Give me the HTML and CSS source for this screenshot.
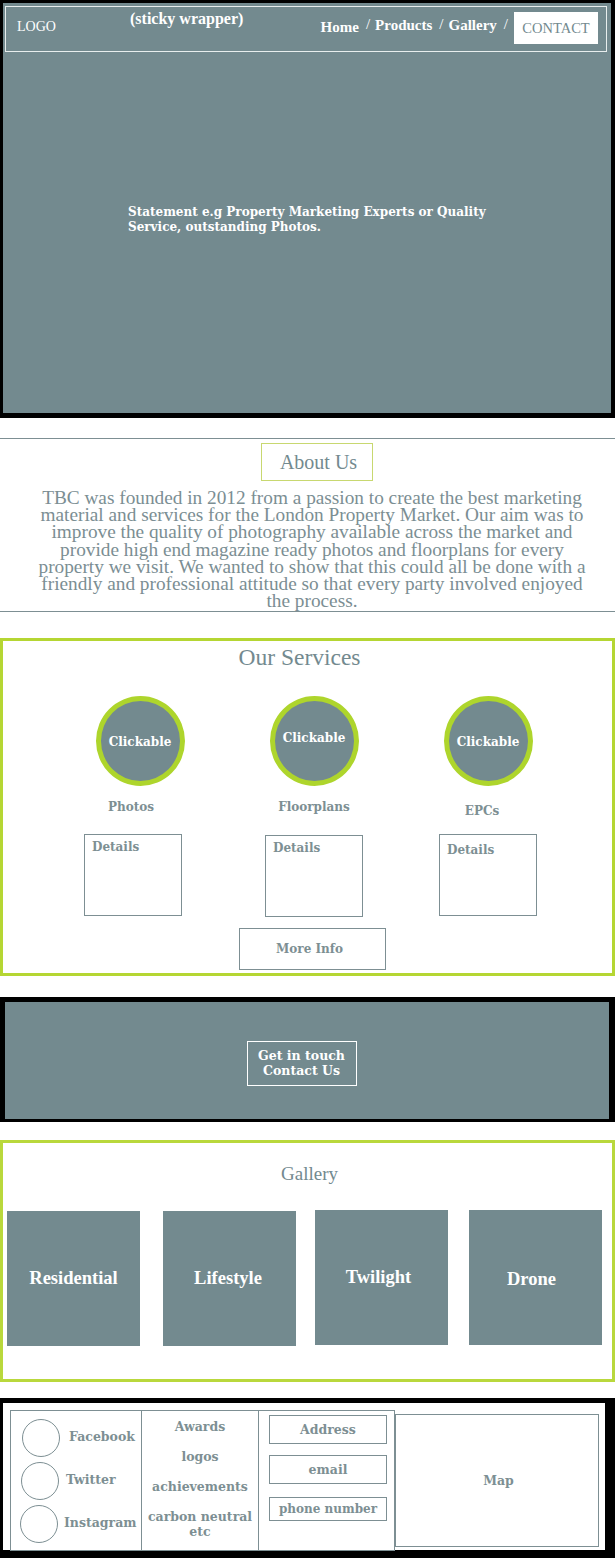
FILE: index.html
```html
<!DOCTYPE html>
<html lang="en">
<head>
<meta charset="utf-8">
<title>TBC</title>
<link rel="stylesheet" href="styles.css">
</head>
<body>
<section class="hero">
  <header class="topbar">
    <div class="logo">LOGO</div>
    <div class="sticky">(sticky wrapper)</div>
    <nav class="nav">
      <a class="nav-link">Home</a>
      <span class="sep">/</span>
      <a class="nav-link">Products</a>
      <span class="sep">/</span>
      <a class="nav-link">Gallery</a>
      <span class="sep">/</span>
      <a class="contact-btn">CONTACT</a>
    </nav>
  </header>
  <p class="statement">Statement e.g Property Marketing Experts or Quality Service, outstanding Photos.</p>
</section>

<section class="about">
  <div class="about-title-wrap"><h2 class="about-title">About Us</h2></div>
  <p class="about-text">TBC was founded in 2012 from a passion to create the best marketing material and services for the London Property Market. Our aim was to improve the quality of photography available across the market and provide high end magazine ready photos and floorplans for every property we visit. We wanted to show that this could all be done with a friendly and professional attitude so that every party involved enjoyed the process.</p>
</section>

<section class="services">
  <h2 class="services-title">Our Services</h2>
  <div class="service-grid">
    <div class="service">
      <div class="circle">Clickable</div>
      <div class="service-label">Photos</div>
      <div class="details">Details</div>
    </div>
    <div class="service">
      <div class="circle circle-up">Clickable</div>
      <div class="service-label">Floorplans</div>
      <div class="details">Details</div>
    </div>
    <div class="service">
      <div class="circle">Clickable</div>
      <div class="service-label label-down">EPCs</div>
      <div class="details">Details</div>
    </div>
  </div>
  <div class="more-wrap"><a class="more-btn">More Info</a></div>
</section>

<section class="cta">
  <a class="cta-btn">Get in touch<br>Contact Us</a>
</section>

<section class="gallery">
  <h2 class="gallery-title">Gallery</h2>
  <div class="tiles">
    <div class="tile">Residential</div>
    <div class="tile">Lifestyle</div>
    <div class="tile">Twilight</div>
    <div class="tile">Drone</div>
  </div>
</section>

<footer class="footer">
  <div class="foot-table">
    <div class="col social">
      <div class="social-row"><span class="ring"></span><span class="social-name">Facebook</span></div>
      <div class="social-row"><span class="ring"></span><span class="social-name">Twitter</span></div>
      <div class="social-row"><span class="ring"></span><span class="social-name">Instagram</span></div>
    </div>
    <div class="col awards">
      <div>Awards</div>
      <div>logos</div>
      <div>achievements</div>
      <div class="carbon">carbon neutral<br>etc</div>
    </div>
    <div class="col contact">
      <div class="cbox">Address</div>
      <div class="cbox">email</div>
      <div class="cbox phone">phone number</div>
    </div>
  </div>
  <div class="map">Map</div>
</footer>
</body>
</html>
```
FILE: styles.css
```css
* { box-sizing: border-box; }
html, body { margin: 0; padding: 0; background: #fff; }
body { width: 615px; font-family: "DejaVu Serif", serif; color: #738a8f; }
h2, p { margin: 0; font-weight: normal; }
a { text-decoration: none; }

/* HERO */
.hero {
  height: 418px;
  background: #738a8f;
  border-style: solid;
  border-color: #000;
  border-width: 3px 4px 5px 3px;
}
.topbar {
  margin: 3px 4px 0 2px;
  height: 46px;
  border: 1px solid #e8eeee;
  display: flex;
  align-items: flex-start;
  color: #fff;
}
.logo {
  width: 124px;
  padding: 12px 0 0 11px;
  font-family: "Liberation Serif", serif;
  font-size: 14px;
}
.sticky {
  padding-top: 3px;
  font-family: "Liberation Serif", serif;
  font-weight: bold;
  font-size: 16px;
}
.nav {
  margin-left: auto;
  margin-right: 8px;
  display: flex;
  align-items: flex-start;
  font-family: "Liberation Serif", serif;
  font-weight: bold;
  font-size: 15px;
}
.nav-link { color: #fff; padding-top: 10px; }
.sep { padding: 9px 5px 0 7px; color: #fff; font-weight: normal; }
.nav-link:first-child { padding-top: 12px; }
.contact-btn {
  margin: 5px 0 0 1px;
  width: 84px;
  height: 32px;
  background: #fff;
  color: #738a8f;
  display: flex;
  align-items: center;
  justify-content: center;
  font-weight: normal;
  font-size: 14.5px;
  padding-top: 1px;
}
.statement {
  margin: 153px 0 0 125px;
  width: 380px;
  color: #fff;
  font-family: "DejaVu Serif", serif;
  font-weight: bold;
  font-size: 12px;
  line-height: 15px;
}

/* ABOUT */
.about {
  margin-top: 20px;
  border-top: 1px solid #7d8f93;
  border-bottom: 1px solid #7d8f93;
  padding: 4px 0 2px;
  font-family: "Liberation Serif", serif;
}
.about-title-wrap { display: flex; justify-content: center; padding-left: 18px; }
.about-title {
  width: 112px;
  height: 38px;
  border: 1px solid #c8d870;
  display: flex;
  align-items: center;
  justify-content: center;
  padding-left: 4px;
  font-size: 20px;
  color: #738a8f;
}
.about-text {
  margin-top: 8px;
  padding: 0 23px 0 32px;
  text-align: center;
  font-size: 19.3px;
  line-height: 17.2px;
  color: #7b8e93;
}

/* SERVICES */
.services {
  margin-top: 26px;
  height: 338px;
  border: 3px solid #b5d633;
  padding-top: 3px;
}
.services-title {
  text-align: center;
  font-family: "Liberation Serif", serif;
  font-size: 23.5px;
  line-height: 26px;
  color: #738a8f;
  padding-right: 16px;
}
.service-grid {
  margin-top: 26px;
  padding: 0 37px 0 50px;
  display: grid;
  grid-template-columns: repeat(3, 174px);
}
.service { display: flex; flex-direction: column; align-items: center; }
.circle {
  width: 89px;
  height: 90px;
  border-radius: 50%;
  border: 5px solid #aed52c;
  background: #738a8f;
  color: #fff;
  font-weight: bold;
  font-size: 12px;
  display: flex;
  align-items: center;
  justify-content: center;
  padding-top: 1px;
}
.circle-up { padding-top: 0; padding-bottom: 7px; }
.service-label {
  margin-top: 13px;
  height: 16px;
  font-size: 12px;
  font-weight: bold;
  line-height: 16px;
  color: #7d8f93;
  padding-right: 18px;
}
.service:nth-child(2) .service-label { padding-right: 0; }
.service:nth-child(3) .service-label { padding-right: 12px; }
.label-down { margin-top: 17px; height: 16px; }
.details {
  margin-top: 19px;
  width: 98px;
  height: 82px;
  border: 1px solid #7d8f93;
  padding: 5px 0 0 7px;
  font-size: 12px;
  font-weight: bold;
  color: #7d8f93;
  margin-right: 14px;
}
.service:nth-child(2) .details { margin-top: 20px; margin-right: 0; }
.service:nth-child(3) .details { margin-top: 15px; margin-right: 0; padding-top: 8px; }
.more-wrap { display: flex; justify-content: center; margin-top: 11px; padding-left: 9px; }
.more-btn {
  width: 147px;
  height: 42px;
  border: 1px solid #7d8f93;
  display: flex;
  align-items: center;
  justify-content: center;
  font-size: 12px;
  font-weight: bold;
  color: #7d8f93;
  padding-right: 5px;
}

/* CTA */
.cta {
  margin-top: 21px;
  height: 125px;
  background: #738a8f;
  border-style: solid;
  border-color: #000;
  border-width: 5px 6px 3px 5px;
  display: flex;
  align-items: center;
  justify-content: center;
  padding: 5px 11px 0 0;
}
.cta-btn {
  width: 110px;
  height: 45px;
  border: 1px solid #fff;
  color: #fff;
  text-align: center;
  font-size: 12.5px;
  font-weight: bold;
  line-height: 15px;
  padding-top: 6px;
}

/* GALLERY */
.gallery {
  margin-top: 18px;
  height: 242px;
  border: 3px solid #b9d83c;
  padding: 0 10px 0 4px;
}
.gallery-title {
  margin-top: 21px;
  text-align: center;
  font-family: "Liberation Serif", serif;
  font-size: 19px;
  line-height: 20px;
  color: #738a8f;
  padding-left: 10px;
}
.tiles {
  margin-top: 27px;
  display: flex;
  align-items: flex-start;
}
.tile {
  width: 133px;
  height: 135px;
  background: #738a8f;
  color: #fff;
  font-family: "Liberation Serif", serif;
  font-size: 18.5px;
  font-weight: bold;
  display: flex;
  align-items: center;
  justify-content: center;
}
.tile:nth-child(2) { margin-left: 23px; padding-right: 3px; }
.tile:nth-child(3) { margin-left: 19px; margin-top: -1px; padding-right: 6px; }
.tile:nth-child(4) { margin-left: 21px; margin-top: -1px; padding-top: 3px; padding-right: 8px; }

/* FOOTER */
.footer {
  margin-top: 16px;
  height: 160px;
  border-style: solid;
  border-color: #000;
  border-width: 5px 10px 8px 3px;
  padding: 7px 0 0 7px;
  display: flex;
  align-items: flex-start;
}
.foot-table {
  display: flex;
  height: 141px;
  border: 1px solid #7d8f93;
}
.col { border-right: 1px solid #7d8f93; }
.col:last-child { border-right: none; }
.social { width: 131px; padding: 7px 0 0 11px; display: flex; flex-direction: column; gap: 4px; }
.social-row { display: flex; align-items: center; height: 39px; }
.social-name { margin-top: -3px; }
.ring {
  width: 38px;
  height: 38px;
  border-radius: 50%;
  border: 1px solid #7d8f93;
  flex: none;
}
.social-name { margin-left: 9px; font-size: 12.5px; font-weight: bold; color: #7d8f93; }
.social-row:nth-child(2) { margin-left: -1px; }
.social-row:nth-child(2) .social-name { margin-left: 7px; }
.social-row:nth-child(3) { margin-left: -2px; }
.social-row:nth-child(3) .social-name { margin-left: 6px; }
.awards {
  width: 117px;
  padding-top: 8px;
  text-align: center;
  font-size: 12.5px;
  font-weight: bold;
  color: #7d8f93;
  display: flex;
  flex-direction: column;
  gap: 14px;
  line-height: 16px;
}
.carbon { line-height: 15px; }
.contact {
  width: 135px;
  padding: 4px 0 0 10px;
  display: flex;
  flex-direction: column;
  gap: 11px;
}
.cbox {
  width: 118px;
  height: 29px;
  border: 1px solid #7d8f93;
  display: flex;
  align-items: center;
  justify-content: center;
  font-size: 12.5px;
  font-weight: bold;
  color: #7d8f93;
}
.phone { height: 24px; margin-top: 2px; font-size: 12px; }
.map {
  margin-top: 4px;
  width: 204px;
  height: 133px;
  border: 1px solid #7d8f93;
  display: flex;
  align-items: center;
  justify-content: center;
  padding-left: 3px;
  font-size: 12.5px;
  font-weight: bold;
  color: #7d8f93;
}
```
